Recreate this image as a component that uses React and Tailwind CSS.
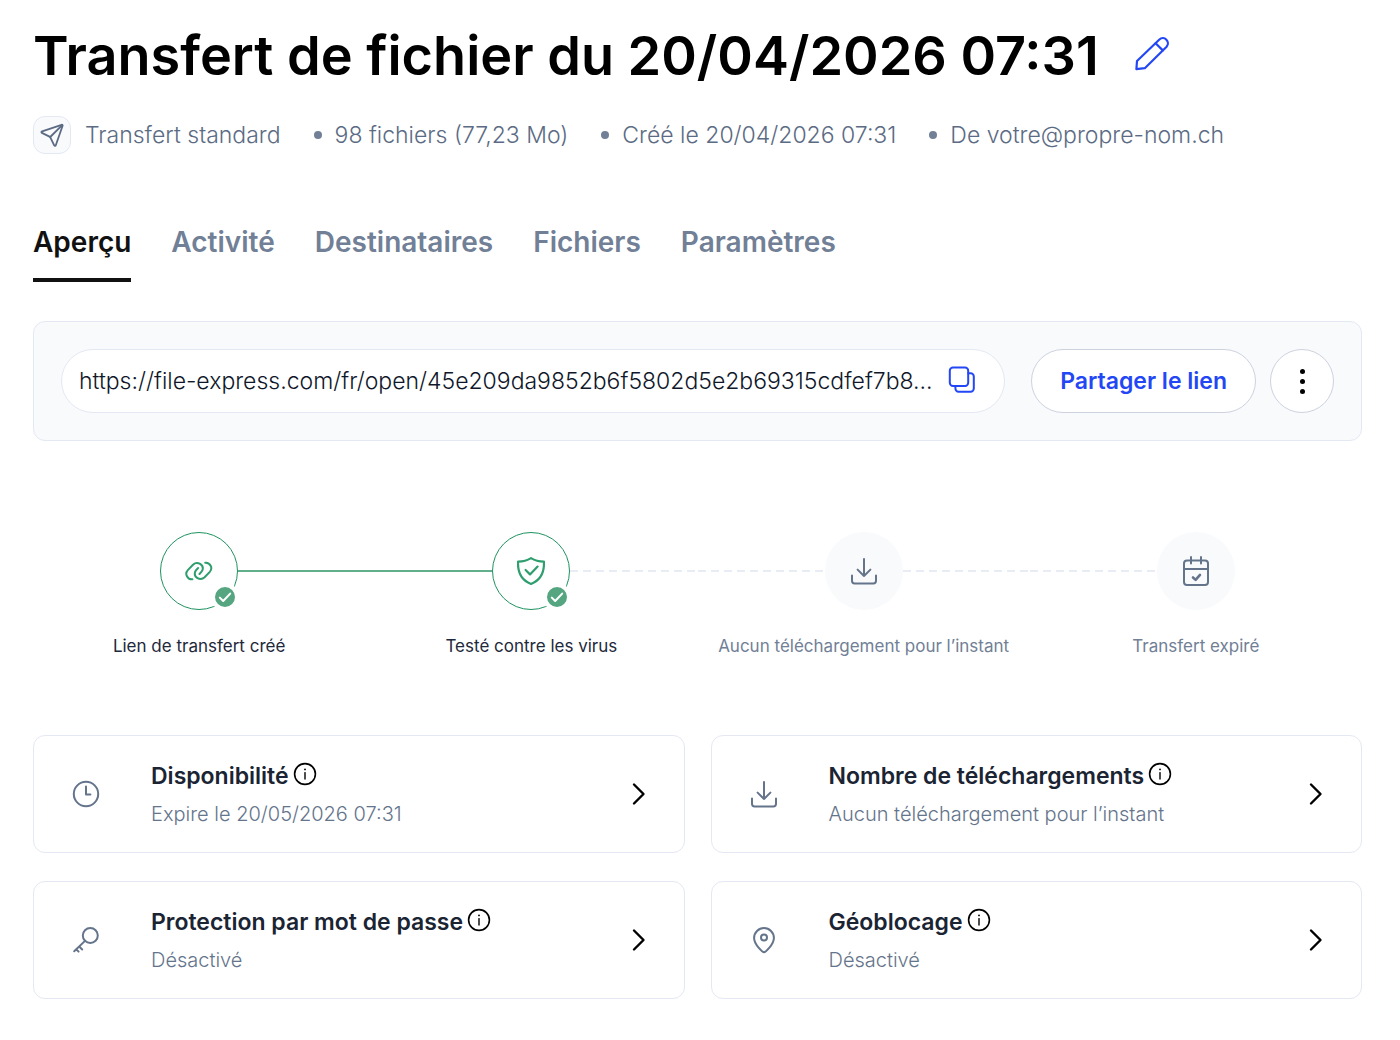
function Svg({ size, className, children, strokeWidth = 2 }) {
  return (
    <svg
      width={size}
      height={size}
      viewBox={`0 0 ${size} ${size}`}
      fill="none"
      stroke="currentColor"
      strokeWidth={strokeWidth}
      strokeLinecap="round"
      strokeLinejoin="round"
      className={className}
      aria-hidden="true"
    >
      {children}
    </svg>
  );
}

const PencilIcon = () => (
  <Svg size={34} strokeWidth={2.2}>
    <path d="M1.4 32.1 2 24 24.4 2.5a5.1 5.1 0 0 1 7.2 7.2L9.8 31.2Z" />
    <path d="m20.6 6.2 7.2 7.2" />
  </Svg>
);

const PlaneIcon = () => (
  <Svg size={24} strokeWidth={1.8} className="shrink-0">
    <path d="M21.6 1.8 2.1 8.3c-.9.3-.9 1.2-.2 1.6l7.6 3.7c.3.2.6.5.8.8l3.9 8c.4.8 1.3.7 1.6-.1l6.8-19.5c.2-.7-.4-1.2-1-1Z" />
    <path d="M10.2 14 22.2 2.2" />
  </Svg>
);

const CopyIcon = () => (
  <Svg size={28}>
    <rect x="1.8" y="1.5" width="18.4" height="18.4" rx="3.2" />
    <path d="M20.2 7.3h2.4a3.2 3.2 0 0 1 3.2 3.2v12a3.2 3.2 0 0 1-3.2 3.2h-12a3.2 3.2 0 0 1-3.2-3.2v-2.4" />
  </Svg>
);

const LinkIcon = () => (
  <Svg size={28}>
    <path d="M7.400 22.300C2.400 22.800-.6 16.800 2.800 13.100L8 7.700c4.400-4.200 11.400.2 9.400 5.600-.4 1.200-1.400 2.200-2.900 3.700" />
    <path
      transform="rotate(180 13.8 14)"
      d="M7.400 22.300C2.400 22.800-.6 16.800 2.800 13.100L8 7.700c4.400-4.200 11.400.2 9.400 5.600-.4 1.200-1.400 2.200-2.900 3.700"
    />
  </Svg>
);

const ShieldIcon = () => (
  <Svg size={28} strokeWidth={2.2}>
    <path d="M14 1.100c3.800 2.400 8.200 3.500 12.900 3.500.6 10.200-2.500 18.200-12.900 22.300C3.600 22.800.5 14.800 1.100 4.600 5.800 4.600 10.200 3.500 14 1.100Z" />
    <path d="m8.600 13 4.400 4.400 7.600-7.800" />
  </Svg>
);

const DownloadIcon = () => (
  <Svg size={28}>
    <path d="M14 2v17M7.600 12.600 14 19l6.400-6.400" />
    <path d="M2 18.400v5.400a2.600 2.600 0 0 0 2.600 2.600h18.800a2.600 2.600 0 0 0 2.600-2.600v-5.400" />
  </Svg>
);

const CalendarIcon = () => (
  <Svg size={32}>
    <rect x="4" y="5.500" width="24" height="24.500" rx="3" />
    <path d="M4 14h24M11 2v6.500M21 2v6.500" />
    <path d="m13 22.500 2.600 2.400 4.400-5" strokeWidth="2.600" />
  </Svg>
);

const ClockIcon = () => (
  <Svg size={28}>
    <circle cx="14" cy="14" r="12.200" />
    <path d="M14 6.500V14.500h4.400" />
  </Svg>
);

const KeyIcon = () => (
  <Svg size={28}>
    <circle cx="18.300" cy="9.500" r="7.500" />
    <path d="M13 14.900 2.200 25.200M7.200 20.500l3 3M4.200 23.200l2.400 2.400" />
  </Svg>
);

const PinIcon = () => (
  <Svg size={28}>
    <path d="M14 26.200c-1.200 0-9.900-7.500-9.900-14.200a9.900 9.900 0 0 1 19.800 0c0 6.700-8.700 14.200-9.900 14.200Z" />
    <circle cx="14" cy="11.500" r="3" />
  </Svg>
);

const InfoIcon = () => (
  <Svg size={24} strokeWidth={1.6}>
    <circle cx="12" cy="12" r="10.400" />
    <path d="M12 10.600v6.400" strokeWidth="1.400" />
    <path d="M12 7.300v.1" strokeWidth="1.800" />
  </Svg>
);

const ChevronIcon = () => (
  <Svg size={24} strokeWidth={2.400} className="shrink-0 text-black">
    <path d="m7 2.500 9.500 9.500L7 21.500" />
  </Svg>
);

const tabs = ["Aperçu", "Activité", "Destinataires", "Fichiers", "Paramètres"];
const meta = ["98 fichiers (77,23 Mo)", "Créé le 20/04/2026 07:31", "De votre@propre-nom.ch"];

const solidLine = "h-0.5 bg-[#62b08b]";
const dashedLine = "h-0.5 bg-[repeating-linear-gradient(to_right,#e8ecf4_0_8px,transparent_8px_13px)]";

const steps = [
  { label: "Lien de transfert créé", Icon: LinkIcon, done: true, before: "invisible", after: solidLine },
  { label: "Testé contre les virus", Icon: ShieldIcon, done: true, before: solidLine, after: dashedLine },
  { label: "Aucun téléchargement pour l’instant", Icon: DownloadIcon, before: dashedLine, after: dashedLine },
  { label: "Transfert expiré", Icon: CalendarIcon, before: dashedLine, after: "invisible" },
];

const cards = [
  { title: "Disponibilité", text: "Expire le 20/05/2026 07:31", Icon: ClockIcon },
  { title: "Nombre de téléchargements", text: "Aucun téléchargement pour l’instant", Icon: DownloadIcon },
  { title: "Protection par mot de passe", text: "Désactivé", Icon: KeyIcon },
  { title: "Géoblocage", text: "Désactivé", Icon: PinIcon },
];

function Step({ label, Icon, done, before, after }) {
  return (
    <li className="flex flex-col items-center">
      <div className="flex w-full items-center">
        <span className={`flex-1 ${before}`} />
        <span
          className={`relative flex size-[78px] items-center justify-center rounded-full ${
            done ? "border border-[#1f9360] text-[#2f9e6e]" : "bg-[#f9fafc] text-[#64748b]"
          }`}
        >
          <Icon />
          {done && (
            <span className="absolute -right-0.5 -bottom-0.5 flex size-7 items-center justify-center rounded-full border-4 border-white bg-[#55a680] text-white">
              <Svg size={20} className="shrink-0">
                <path d="m4.800 10.600 3.400 3.400 7-7.400" />
              </Svg>
            </span>
          )}
        </span>
        <span className={`flex-1 ${after}`} />
      </div>
      <span className={`mt-6 text-[17px] leading-6 ${done ? "text-[#1e293b]" : "text-[#718096]"}`}>{label}</span>
    </li>
  );
}

function Card({ title, text, Icon }) {
  return (
    <article className="flex items-center rounded-xl border border-[#e4e8f2] py-6 pr-[33px] pl-[38px]">
      <span className="shrink-0 text-[#64748b]">
        <Icon />
      </span>
      <div className="ml-[51px] min-w-0 flex-1">
        <div className="flex items-center gap-1">
          <h2 className="text-[23px] leading-8 font-semibold text-[#1a2433]">{title}</h2>
          <button type="button" aria-label={`Informations : ${title}`} className="mb-1 text-black">
            <InfoIcon />
          </button>
        </div>
        <p className="mt-2 text-[20px] leading-7 font-light text-[#64748b]">{text}</p>
      </div>
      <button type="button" aria-label={`Ouvrir : ${title}`}>
        <ChevronIcon />
      </button>
    </article>
  );
}

export default function App() {
  return (
    <main className="min-h-screen bg-white pt-5 pr-[38px] pb-10 pl-[33px] font-['Inter',sans-serif]">
      <header>
        <div className="flex items-center gap-9">
          <h1 className="text-[54px] leading-[72px] font-semibold text-black">
            Transfert de fichier du 20/04/2026 07:31
          </h1>
          <button type="button" aria-label="Renommer le transfert" className="mb-1 text-[#2347f5]">
            <PencilIcon />
          </button>
        </div>
        <div className="mt-6 flex items-center text-[23px] leading-8 font-light text-[#5b6b84]">
          <span className="mr-[14px] flex size-[38px] items-center justify-center rounded-xl border border-[#e4e8f2] bg-[#f9fafc]">
            <PlaneIcon />
          </span>
          <span>Transfert standard</span>
          {meta.map((item) => (
            <span key={item} className="ml-[33px] flex items-center gap-[13px]">
              <span className="size-2 rounded-full bg-[#718096]" />
              {item}
            </span>
          ))}
        </div>
      </header>

      <nav className="mt-[70px] flex gap-10 text-[28px] leading-9 font-semibold" aria-label="Sections">
        {tabs.map((tab, i) => (
          <a
            key={tab}
            href="#"
            aria-current={i === 0 ? "page" : undefined}
            className={i === 0 ? "border-b-4 border-[#111111] pb-[18px] text-[#111111]" : "text-[#718096]"}
          >
            {tab}
          </a>
        ))}
      </nav>

      <section className="mt-[39px] flex items-center rounded-xl border border-[#e4e8f2] bg-[#f9fafc] p-[27px]">
        <div className="flex h-16 min-w-0 flex-1 items-center rounded-full border border-[#e4e8f2] bg-white pr-7 pl-[17px]">
          <input
            type="text"
            readOnly
            aria-label="Lien de transfert"
            value="https://file-express.com/fr/open/45e209da9852b6f5802d5e2b69315cdfef7b8..."
            className="mr-1 min-w-0 flex-1 text-[23px] font-light text-[#0f172a] outline-none"
          />
          <button type="button" aria-label="Copier le lien" className="mb-0.5 text-[#2347f5]">
            <CopyIcon />
          </button>
        </div>
        <button type="button" className="ml-[26px] h-16 rounded-full border border-[#cdd2df] bg-white px-7 text-[23px] font-semibold text-[#2347f5]">
          Partager le lien
        </button>
        <button type="button" aria-label="Plus d’options" className="ml-[14px] flex size-16 flex-col items-center justify-center gap-[5px] rounded-full border border-[#cdd2df] bg-white">
          <span className="size-[5px] rounded-full bg-black" />
          <span className="size-[5px] rounded-full bg-black" />
          <span className="size-[5px] rounded-full bg-black" />
        </button>
      </section>

      <ol className="mt-[91px] grid grid-cols-4">
        {steps.map((s) => (
          <Step key={s.label} {...s} />
        ))}
      </ol>

      <section className="mt-[77px] grid grid-cols-2 gap-x-[26px] gap-y-7">
        {cards.map((c) => (
          <Card key={c.title} {...c} />
        ))}
      </section>
    </main>
  );
}
